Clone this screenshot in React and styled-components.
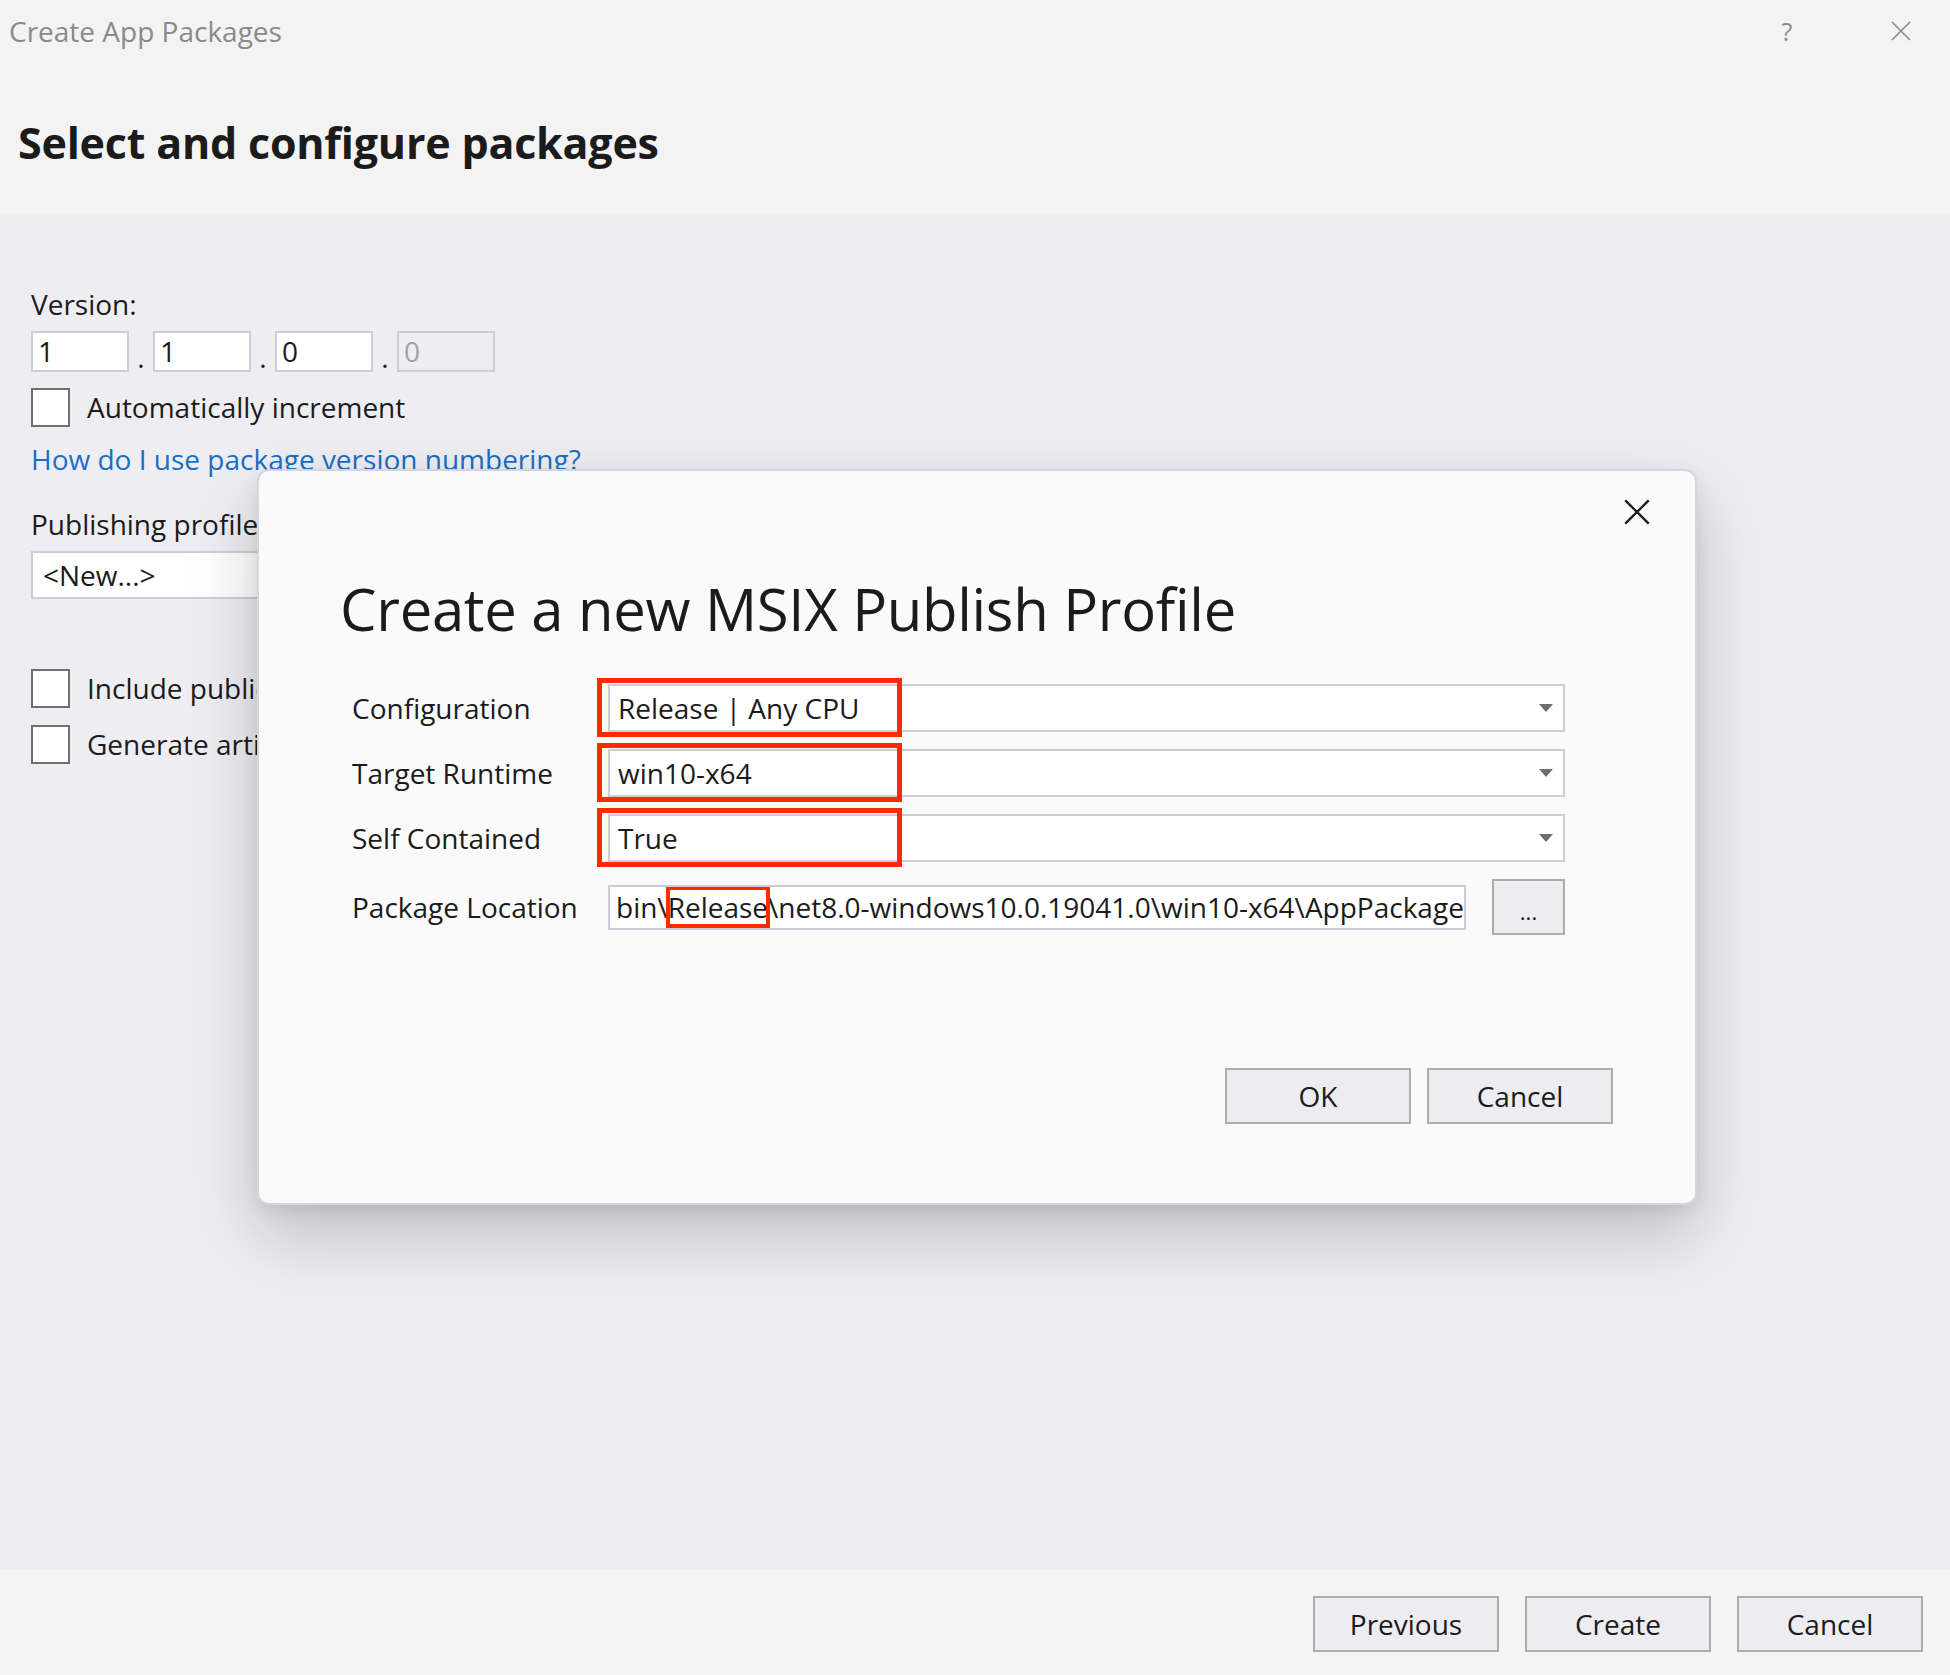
import React from 'react';
import styled, { createGlobalStyle } from 'styled-components';

const Global = createGlobalStyle`
  html, body { margin: 0; padding: 0; }
  body {
    font-family: "Open Sans", "Noto Sans", sans-serif;
    color: #1b1b1b;
  }
  * { box-sizing: border-box; }
`;

const FONT = `"Open Sans", "Noto Sans", sans-serif`;
const TEXT = 28;

const Window = styled.div`
  position: relative;
  width: 1950px;
  height: 1675px;
  display: flex;
  flex-direction: column;
  background: #eeeef2;
  overflow: hidden;
  font-family: ${FONT};
`;

const TitleBar = styled.div`
  height: 62px;
  flex: none;
  display: flex;
  align-items: center;
  background: #f3f3f3;
  padding: 0 4px 0 9px;
`;

const WindowTitle = styled.div`
  font-size: 28px;
  color: #8a8a8a;
`;

const TitleButtons = styled.div`
  margin-left: auto;
  display: flex;
  gap: 24px;
`;

const TitleButton = styled.div`
  width: 90px;
  height: 50px;
  display: flex;
  align-items: center;
  justify-content: center;
  color: #8a8a8a;
  font-size: 25px;
`;

const Header = styled.div`
  height: 152px;
  flex: none;
  display: flex;
  align-items: center;
  padding: 8px 18px 0;
  background: #f3f3f3;
`;

const PageHeading = styled.h1`
  margin: 0;
  font-size: 43px;
  font-weight: 700;
  color: #1b1b1b;
  letter-spacing: -0.2px;
`;

const Body = styled.div`
  flex: 1;
  padding: 72px 31px 0;
  display: flex;
  flex-direction: column;
`;

const FieldLabel = styled.div`
  font-size: ${TEXT}px;
  line-height: 36px;
  margin-top: ${p => p.$mt || 0}px;
`;

const VersionRow = styled.div`
  display: flex;
  align-items: flex-end;
  margin-top: 9px;
`;

const VersionInput = styled.div`
  width: 98px;
  height: 41px;
  border: 2px solid #cdcdd9;
  background: ${p => (p.$disabled ? '#eeeef2' : '#ffffff')};
  color: ${p => (p.$disabled ? '#a3a3a3' : '#1b1b1b')};
  font-size: ${TEXT}px;
  line-height: 37px;
  padding-left: 5px;
`;

const VersionDot = styled.span`
  width: 24px;
  text-align: center;
  font-size: ${TEXT}px;
  line-height: 30px;
`;

const CheckRow = styled.label`
  display: flex;
  align-items: center;
  gap: 17px;
  margin-top: ${p => p.$mt || 0}px;
  font-size: ${TEXT}px;
  line-height: 39px;
  white-space: nowrap;
`;

const CheckBox = styled.span`
  width: 39px;
  height: 39px;
  flex: none;
  border: 2px solid #6f6f6f;
  background: #ffffff;
`;

const HelpLink = styled.a`
  margin-top: 14px;
  font-size: ${TEXT}px;
  line-height: 36px;
  color: #1a6ec4;
  text-decoration: none;
`;

const ProfileSelect = styled.div`
  margin-top: 9px;
  width: 520px;
  height: 48px;
  border: 2px solid #cdcdd9;
  background: #ffffff;
  font-size: ${TEXT}px;
  line-height: 44px;
  padding-left: 10px;
`;

const Footer = styled.div`
  height: 106px;
  flex: none;
  display: flex;
  justify-content: flex-end;
  gap: 26px;
  padding: 27px 27px 0;
  background: #f4f4f4;
`;

const Button = styled.button`
  width: 186px;
  height: 56px;
  border: 2px solid #adadad;
  background: #ececf1;
  font-family: ${FONT};
  font-size: ${TEXT}px;
  color: #1b1b1b;
  padding: 0;
`;

/* Modal dialog overlaying the page */
const Dialog = styled.div`
  position: absolute;
  left: 257px;
  top: 469px;
  width: 1440px;
  height: 736px;
  background: #fafafa;
  border: 2px solid #d5d5df;
  border-radius: 12px;
  box-shadow: 0 30px 70px rgba(0, 0, 0, 0.2), 0 6px 16px rgba(0, 0, 0, 0.08);
  padding: 100px 82px 79px 81px;
  display: flex;
  flex-direction: column;
`;

const CloseButton = styled.div`
  position: absolute;
  top: 26px;
  right: 43px;
  width: 30px;
  height: 30px;
  display: flex;
  align-items: center;
  justify-content: center;
`;

const DialogTitle = styled.h2`
  margin: 0;
  font-size: 58px;
  line-height: 76px;
  font-weight: 400;
  color: #1b1b1b;
  letter-spacing: -0.3px;
`;

const Form = styled.div`
  margin: 37px 48px 0 12px;
  display: grid;
  grid-template-columns: 256px minmax(0, 1fr);
  row-gap: 17px;
  align-items: center;
`;

const FormLabel = styled.div`
  font-size: ${TEXT}px;
`;

const SelectBox = styled.div`
  position: relative;
  height: 48px;
  border: 2px solid #cdcdd9;
  background: #ffffff;
  display: flex;
  align-items: center;
  padding: 0 10px 0 8px;
  font-size: ${TEXT}px;
`;

const SelectValue = styled.span`
  flex: 1;
`;

const Highlight = styled.span`
  position: absolute;
  left: -13px;
  top: -8px;
  width: 305px;
  height: 59px;
  border: 5px solid #ff2a00;
  pointer-events: none;
`;

const LocationRow = styled.div`
  display: flex;
  align-items: center;
  gap: 26px;
  min-width: 0;
`;

const TextBox = styled.div`
  flex: 1;
  min-width: 0;
  height: 45px;
  border: 2px solid #cdcdd9;
  background: #ffffff;
  font-size: ${TEXT}px;
  line-height: 41px;
  padding-left: 6px;
  white-space: nowrap;
  overflow: hidden;
`;

const Marked = styled.span`
  outline: 4px solid #ff2a00;
  outline-offset: -2px;
`;

const BrowseButton = styled(Button)`
  flex: none;
  width: 73px;
  height: 56px;
  font-size: 22px;
  line-height: 1;
  padding-top: 8px;
`;

const DialogButtons = styled.div`
  margin-top: auto;
  display: flex;
  justify-content: flex-end;
  gap: 16px;
`;

const Arrow = () => (
  <svg width="14" height="8" viewBox="0 0 14 8">
    <path d="M0 0 L14 0 L7 8 Z" fill="#6d6d6d" />
  </svg>
);

const XIcon = ({ size = 20, color = '#8a8a8a', w = 1.6 }) => (
  <svg width={size} height={size} viewBox="0 0 20 20">
    <path d="M1 1 L19 19 M19 1 L1 19" stroke={color} strokeWidth={w} fill="none" />
  </svg>
);

const Select = ({ value, highlight }) => (
  <SelectBox>
    {highlight && <Highlight />}
    <SelectValue>{value}</SelectValue>
    <Arrow />
  </SelectBox>
);

export default function App() {
  return (
    <Window>
      <Global />
      <TitleBar>
        <WindowTitle>Create App Packages</WindowTitle>
        <TitleButtons>
          <TitleButton>?</TitleButton>
          <TitleButton>
            <XIcon size={20} />
          </TitleButton>
        </TitleButtons>
      </TitleBar>
      <Header>
        <PageHeading>Select and configure packages</PageHeading>
      </Header>
      <Body>
        <FieldLabel>Version:</FieldLabel>
        <VersionRow>
          <VersionInput>1</VersionInput>
          <VersionDot>.</VersionDot>
          <VersionInput>1</VersionInput>
          <VersionDot>.</VersionDot>
          <VersionInput>0</VersionInput>
          <VersionDot>.</VersionDot>
          <VersionInput $disabled>0</VersionInput>
        </VersionRow>
        <CheckRow $mt={16}>
          <CheckBox />
          Automatically increment
        </CheckRow>
        <HelpLink href="#">How do I use package version numbering?</HelpLink>
        <FieldLabel $mt={29}>Publishing profile</FieldLabel>
        <ProfileSelect>&lt;New...&gt;</ProfileSelect>
        <CheckRow $mt={70}>
          <CheckBox />
          Include public symbol files
        </CheckRow>
        <CheckRow $mt={17}>
          <CheckBox />
          Generate artifacts
        </CheckRow>
      </Body>
      <Footer>
        <Button>Previous</Button>
        <Button>Create</Button>
        <Button>Cancel</Button>
      </Footer>

      <Dialog>
        <CloseButton>
          <XIcon size={26} color="#1b1b1b" w={1.8} />
        </CloseButton>
        <DialogTitle>Create a new MSIX Publish Profile</DialogTitle>
        <Form>
          <FormLabel>Configuration</FormLabel>
          <Select value="Release | Any CPU" highlight />
          <FormLabel>Target Runtime</FormLabel>
          <Select value="win10-x64" highlight />
          <FormLabel>Self Contained</FormLabel>
          <Select value="True" highlight />
          <FormLabel>Package Location</FormLabel>
          <LocationRow>
            <TextBox>
              bin\<Marked>Release</Marked>\net8.0-windows10.0.19041.0\win10-x64\AppPackages\
            </TextBox>
            <BrowseButton>...</BrowseButton>
          </LocationRow>
        </Form>
        <DialogButtons>
          <Button>OK</Button>
          <Button>Cancel</Button>
        </DialogButtons>
      </Dialog>
    </Window>
  );
}
